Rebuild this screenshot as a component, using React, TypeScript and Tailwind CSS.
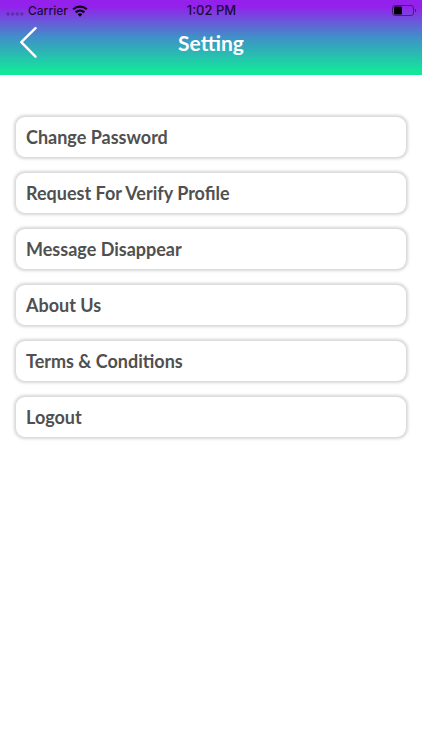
const settings = [
  { title: "Change Password", link: "#change-password" },
  { title: "Request For Verify Profile", link: "#verify-profile" },
  { title: "Message Disappear", link: "#message-disappear" },
  { title: "About Us", link: "#about-us" },
  { title: "Terms & Conditions", link: "#terms" },
];

const itemClass =
  "flex h-10 w-full items-center rounded-[9px] bg-white px-[10px] text-left text-[18px] font-bold text-[#505050] shadow-[0_0_3px_2px_rgba(0,0,0,0.16)]";

function StatusBar() {
  return (
    <div className="grid h-[22px] grid-cols-3 items-center pl-[6px] pr-[5px] font-['Inter',sans-serif] text-[12px] font-medium text-black/80">
      <div className="flex items-center gap-1">
        <svg width="18" height="4" viewBox="0 0 18 4" className="mt-1.5 fill-black/25">
          <circle cx="2" cy="2" r="1.7" />
          <circle cx="6.6" cy="2" r="1.7" />
          <circle cx="11.2" cy="2" r="1.7" />
          <circle cx="15.8" cy="2" r="1.7" />
        </svg>
        <span>Carrier</span>
        <svg width="16" height="12" viewBox="0 0 16 12" fill="none" stroke="black" strokeOpacity="0.9" strokeWidth="2.3">
          <path d="M1.2 4.3C5 0.6 11 0.6 14.8 4.3" />
          <path d="M3.7 7.3C6.2 5 9.8 5 12.3 7.3" />
          <path d="M8 11.7L5.6 9.3C7 8 9 8 10.4 9.3Z" fill="black" stroke="none" />
        </svg>
      </div>
      <span className="text-center text-[13px]">1:02 PM</span>
      <svg width="25" height="12" viewBox="0 0 25 12" className="justify-self-end">
        <rect x="0.5" y="0.5" width="21" height="10" rx="2.5" fill="none" stroke="black" strokeOpacity="0.45" />
        <rect x="2" y="1.5" width="8" height="8" rx="1.3" fill="black" />
        <path d="M23 3.7V7.3C24.6 6.7 24.6 4.3 23 3.7Z" fill="black" fillOpacity="0.5" />
      </svg>
    </div>
  );
}

export default function App() {
  return (
    <main className="min-h-screen bg-white font-['Lato',sans-serif]">
      <header className="bg-linear-to-b/srgb from-[#9420ec] from-8% via-[#3f91c8] via-50% to-[#14e69b] to-95% pb-[11px]">
        <StatusBar />
        <div className="grid h-[42px] grid-cols-3 items-center px-5">
          <button aria-label="Back" className="justify-self-start">
            <svg width="17" height="32" viewBox="0 0 17 32" fill="none" stroke="white" strokeWidth="2.4" strokeLinecap="round">
              <path d="M15.5 1.2L1.3 15.2L15.5 29.7" strokeLinejoin="round" />
            </svg>
          </button>
          <h1 className="text-center text-[21px] font-bold text-white">Setting</h1>
        </div>
      </header>

      <nav className="px-4 pt-[42px]">
        <ul className="space-y-4">
          {settings.map((item) => (
            <li key={item.title}>
              <a href={item.link} className={itemClass}>
                {item.title}
              </a>
            </li>
          ))}
          <li>
            <button className={itemClass}>Logout</button>
          </li>
        </ul>
      </nav>
    </main>
  );
}
